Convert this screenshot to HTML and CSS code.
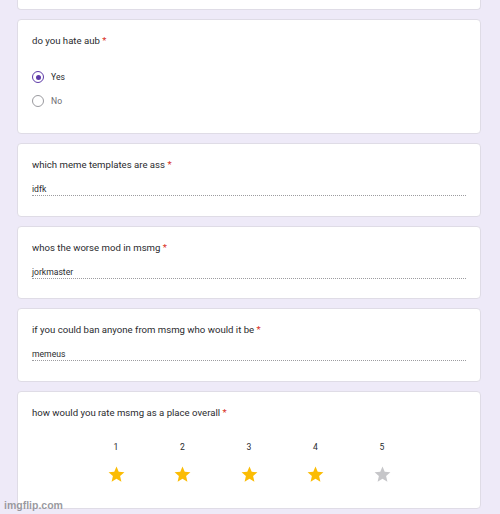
FILE: index.html
```html
<!DOCTYPE html>
<html>
<head>
<meta charset="utf-8">
<link rel="stylesheet" href="styles.css">
</head>
<body>
<div class="page">
  <div class="card card-top"></div>

  <div class="card">
    <div class="title">do you hate aub <span class="req">*</span></div>
    <div class="radios">
      <div class="radio-row">
        <span class="radio checked"><span class="dot"></span></span>
        <span class="label">Yes</span>
      </div>
      <div class="radio-row">
        <span class="radio"></span>
        <span class="label muted">No</span>
      </div>
    </div>
  </div>

  <div class="card text-card">
    <div class="title">which meme templates are ass <span class="req">*</span></div>
    <div class="answer">idfk</div>
  </div>

  <div class="card text-card">
    <div class="title">whos the worse mod in msmg <span class="req">*</span></div>
    <div class="answer">jorkmaster</div>
  </div>

  <div class="card text-card">
    <div class="title">if you could ban anyone from msmg who would it be <span class="req">*</span></div>
    <div class="answer">memeus</div>
  </div>

  <div class="card rating-card">
    <div class="title">how would you rate msmg as a place overall <span class="req">*</span></div>
    <div class="scale">
      <div class="col"><span class="num">1</span><svg class="star on" viewBox="0 0 24 24"><path d="M12 17.27L18.18 21l-1.64-7.03L22 9.24l-7.19-.61L12 2 9.19 8.63 2 9.24l5.460 4.73L5.82 21z"/></svg></div>
      <div class="col"><span class="num">2</span><svg class="star on" viewBox="0 0 24 24"><path d="M12 17.27L18.18 21l-1.64-7.03L22 9.24l-7.19-.61L12 2 9.19 8.63 2 9.24l5.46 4.73L5.82 21z"/></svg></div>
      <div class="col"><span class="num">3</span><svg class="star on" viewBox="0 0 24 24"><path d="M12 17.27L18.18 21l-1.64-7.03L22 9.24l-7.19-.61L12 2 9.19 8.63 2 9.24l5.46 4.73L5.82 21z"/></svg></div>
      <div class="col"><span class="num">4</span><svg class="star on" viewBox="0 0 24 24"><path d="M12 17.27L18.18 21l-1.64-7.03L22 9.24l-7.19-.61L12 2 9.19 8.63 2 9.24l5.46 4.73L5.82 21z"/></svg></div>
      <div class="col"><span class="num">5</span><svg class="star off" viewBox="0 0 24 24"><path d="M12 17.27L18.18 21l-1.64-7.03L22 9.24l-7.19-.61L12 2 9.19 8.63 2 9.24l5.46 4.73L5.82 21z"/></svg></div>
    </div>
  </div>
</div>
<div class="watermark">imgflip.com</div>
</body>
</html>
```
FILE: styles.css
```css
html, body {
  margin: 0;
  padding: 0;
}
body {
  background: #eeeaf8;
  width: 500px;
  height: 514px;
  overflow: hidden;
  position: relative;
  font-family: Roboto, "Liberation Sans", Arial, sans-serif;
  color: #202124;
}
.page {
  display: flex;
  flex-direction: column;
  gap: 9px;
  padding: 0 19px 0 17px;
}
.card {
  background: #fff;
  border: 1px solid #dfdce6;
  border-radius: 4px;
  padding: 14px 14px 20px 14px;
  box-sizing: border-box;
}
.card-top {
  height: 10px;
  padding: 0;
  border-top: none;
  border-radius: 0 0 4px 4px;
}
.title {
  font-size: 9.6px;
  line-height: 14px;
  color: #2a2b2e;
}
.req {
  color: #d93025;
}
.radios {
  margin-top: 17px;
  display: flex;
  flex-direction: column;
}
.radio-row {
  height: 24px;
  display: flex;
  align-items: center;
  gap: 7px;
  margin-left: 0;
}
.radio {
  width: 12px;
  height: 12px;
  border: 1px solid #9a9a9f;
  border-radius: 50%;
  box-sizing: border-box;
  display: flex;
  align-items: center;
  justify-content: center;
}
.radio.checked {
  border: 1.5px solid #5e3aa8;
}
.dot {
  width: 5px;
  height: 5px;
  border-radius: 50%;
  background: #5e3aa8;
}
.label {
  font-size: 8.6px;
  color: #2a2b2e;
}
.label.muted {
  color: #6b6b70;
}
.text-card {
  padding-bottom: 19.5px;
}
.answer {
  margin-top: 11px;
  font-size: 8.6px;
  line-height: 12px;
  color: #2a2b2e;
  border-bottom: 1px dotted #9c9ca0;
}
.rating-card {
  padding-bottom: 24px;
}
.scale {
  margin-top: 21px;
  display: flex;
  justify-content: center;
}
.col {
  width: 66.5px;
  display: flex;
  flex-direction: column;
  align-items: center;
}
.num {
  font-size: 8.6px;
  line-height: 12px;
  color: #2a2b2e;
}
.star {
  width: 19px;
  height: 19px;
  margin-top: 12px;
}
.star.on {
  fill: #fbbc04;
}
.star.off {
  fill: #c6c6c9;
}
.watermark {
  position: absolute;
  left: 4px;
  bottom: 3px;
  font-family: "Liberation Sans", Arial, sans-serif;
  font-weight: bold;
  font-size: 10.5px;
  color: rgba(120, 120, 128, 0.75);
  text-shadow: 0 0 1px rgba(255, 255, 255, 0.6);
}
```
